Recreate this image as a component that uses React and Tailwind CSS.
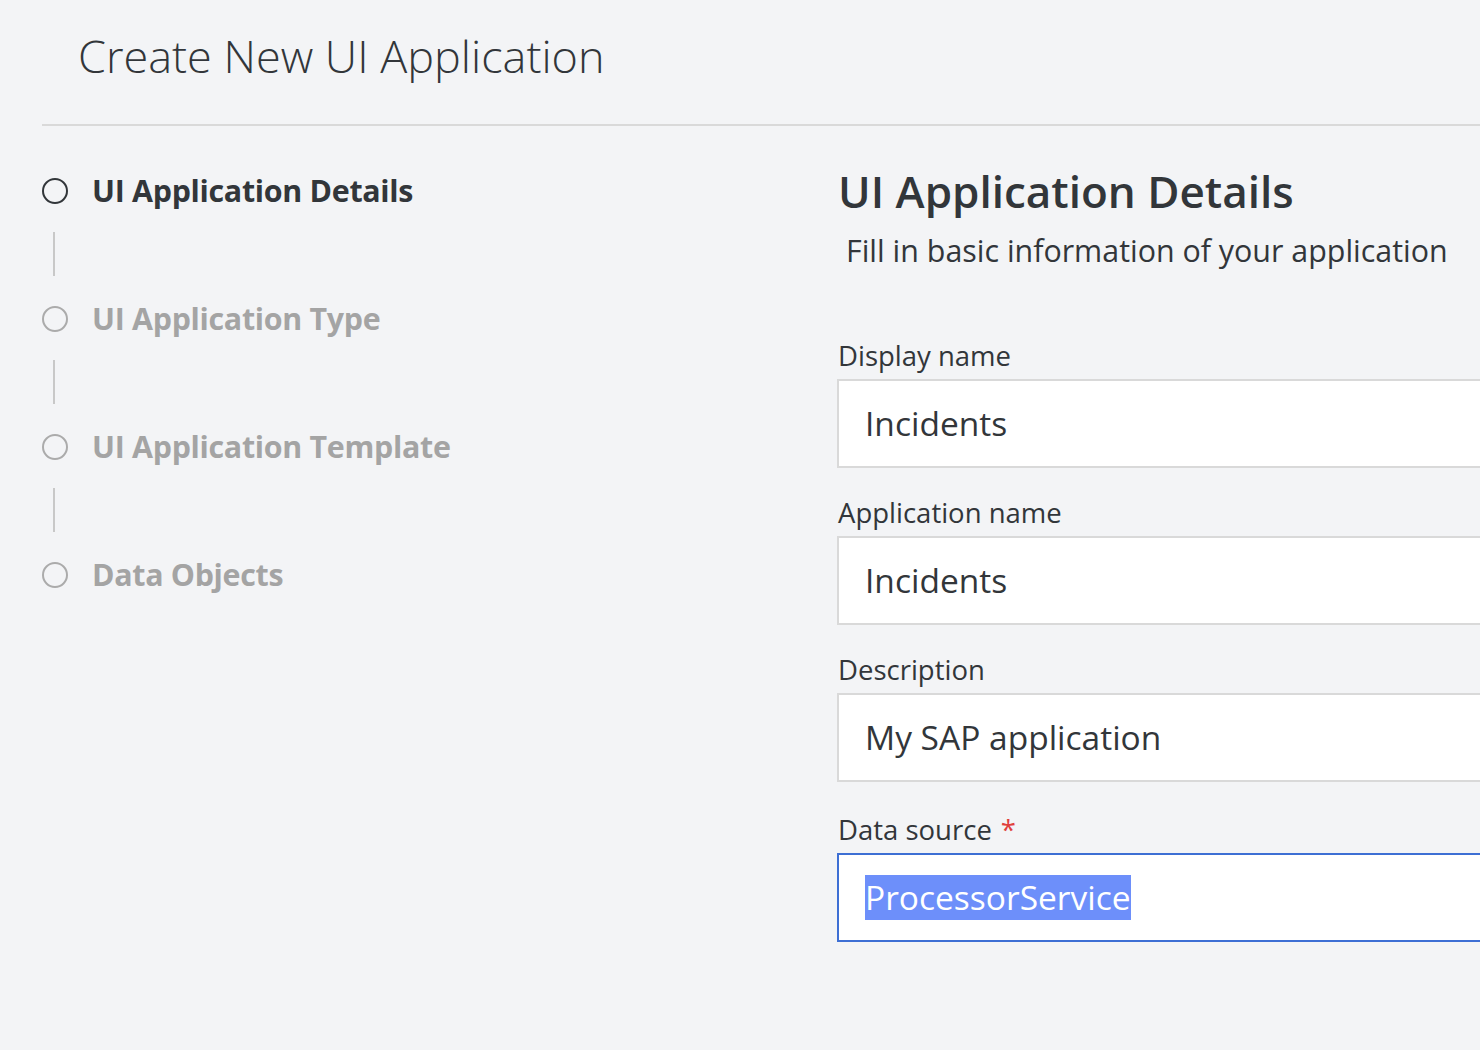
import React from 'react';

const steps = [
    { label: 'UI Application Details', active: true },
    { label: 'UI Application Type' },
    { label: 'UI Application Template' },
    { label: 'Data Objects' },
];

const fields = [
    { label: 'Display name', value: 'Incidents' },
    { label: 'Application name', value: 'Incidents' },
    { label: 'Description', value: 'My SAP application' },
];

const Step = ({ label, active, last }) => (
    <div className="flex flex-col">
        <div className="flex items-center h-[26px]">
            <div
                className={`w-[26px] h-[26px] shrink-0 rounded-full border-2 ${active ? 'border-[#32363a]' : 'border-[#ababab]'}`}
            />
            <span
                className={`ml-[24px] text-[30.4px] font-bold leading-[40px] whitespace-nowrap tracking-[-0.3px] ${active ? 'text-[#32363a]' : 'text-[#a4a4a4]'}`}
            >
                {label}
            </span>
        </div>
        {!last && <div className="ml-[11px] mt-[28px] mb-[30px] w-[2px] h-[44px] bg-[#c8c8c8]" />}
    </div>
);

const Field = ({ label, value, required, focused }) => (
    <div className="flex flex-col">
        <label className="ml-[1px] text-[27.5px] leading-[30px] text-[#32363a] whitespace-nowrap">
            {label}
            {required && <span className="ml-[9px] text-[#e0403c]">*</span>}
        </label>
        <div
            className={`mt-[8px] h-[89px] w-[760px] bg-white border-2 flex items-center pl-[26px] ${focused ? 'border-[#3d6fd4]' : 'border-[#d9d9d9]'}`}
        >
            {focused ? (
                <span className="bg-[#6d8ffa] text-white text-[33.5px] leading-[45px] whitespace-nowrap">{value}</span>
            ) : (
                <span className="text-[#32363a] text-[33.5px] leading-[45px] whitespace-nowrap">{value}</span>
            )}
        </div>
    </div>
);

export default function App() {
    return (
        <div
            className="w-[1480px] h-[1050px] overflow-hidden bg-[#f3f4f6]"
            style={{ fontFamily: '"Open Sans", "Noto Sans", sans-serif' }}
        >
            <div className="pl-[42px]">
                {/* header */}
                <div className="h-[126px] border-b-2 border-[#d9d9d9] pt-[26px]">
                    <h1 className="ml-[36px] text-[45px] font-light leading-[60px] text-[#32363a] whitespace-nowrap">
                        Create New UI Application
                    </h1>
                </div>

                <div className="flex">
                    {/* wizard steps */}
                    <div className="w-[795px] shrink-0 pt-[52px]">
                        {steps.map((s, i) => (
                            <Step key={s.label} {...s} last={i === steps.length - 1} />
                        ))}
                    </div>

                    {/* form */}
                    <div className="shrink-0 pt-[37px]">
                        <h2 className="ml-[1px] text-[44px] font-semibold leading-[56px] text-[#32363a] whitespace-nowrap">
                            UI Application Details
                        </h2>
                        <p className="mt-[12px] ml-[9px] text-[30.4px] leading-[40px] text-[#32363a] whitespace-nowrap">
                            Fill in basic information of your application
                        </p>

                        <div className="mt-[70px] flex flex-col gap-[30px]">
                            {fields.map((f) => (
                                <Field key={f.label} {...f} />
                            ))}
                            <div className="mt-[3px]">
                                <Field label="Data source" value="ProcessorService" required focused />
                            </div>
                        </div>
                    </div>
                </div>
            </div>
        </div>
    );
}
